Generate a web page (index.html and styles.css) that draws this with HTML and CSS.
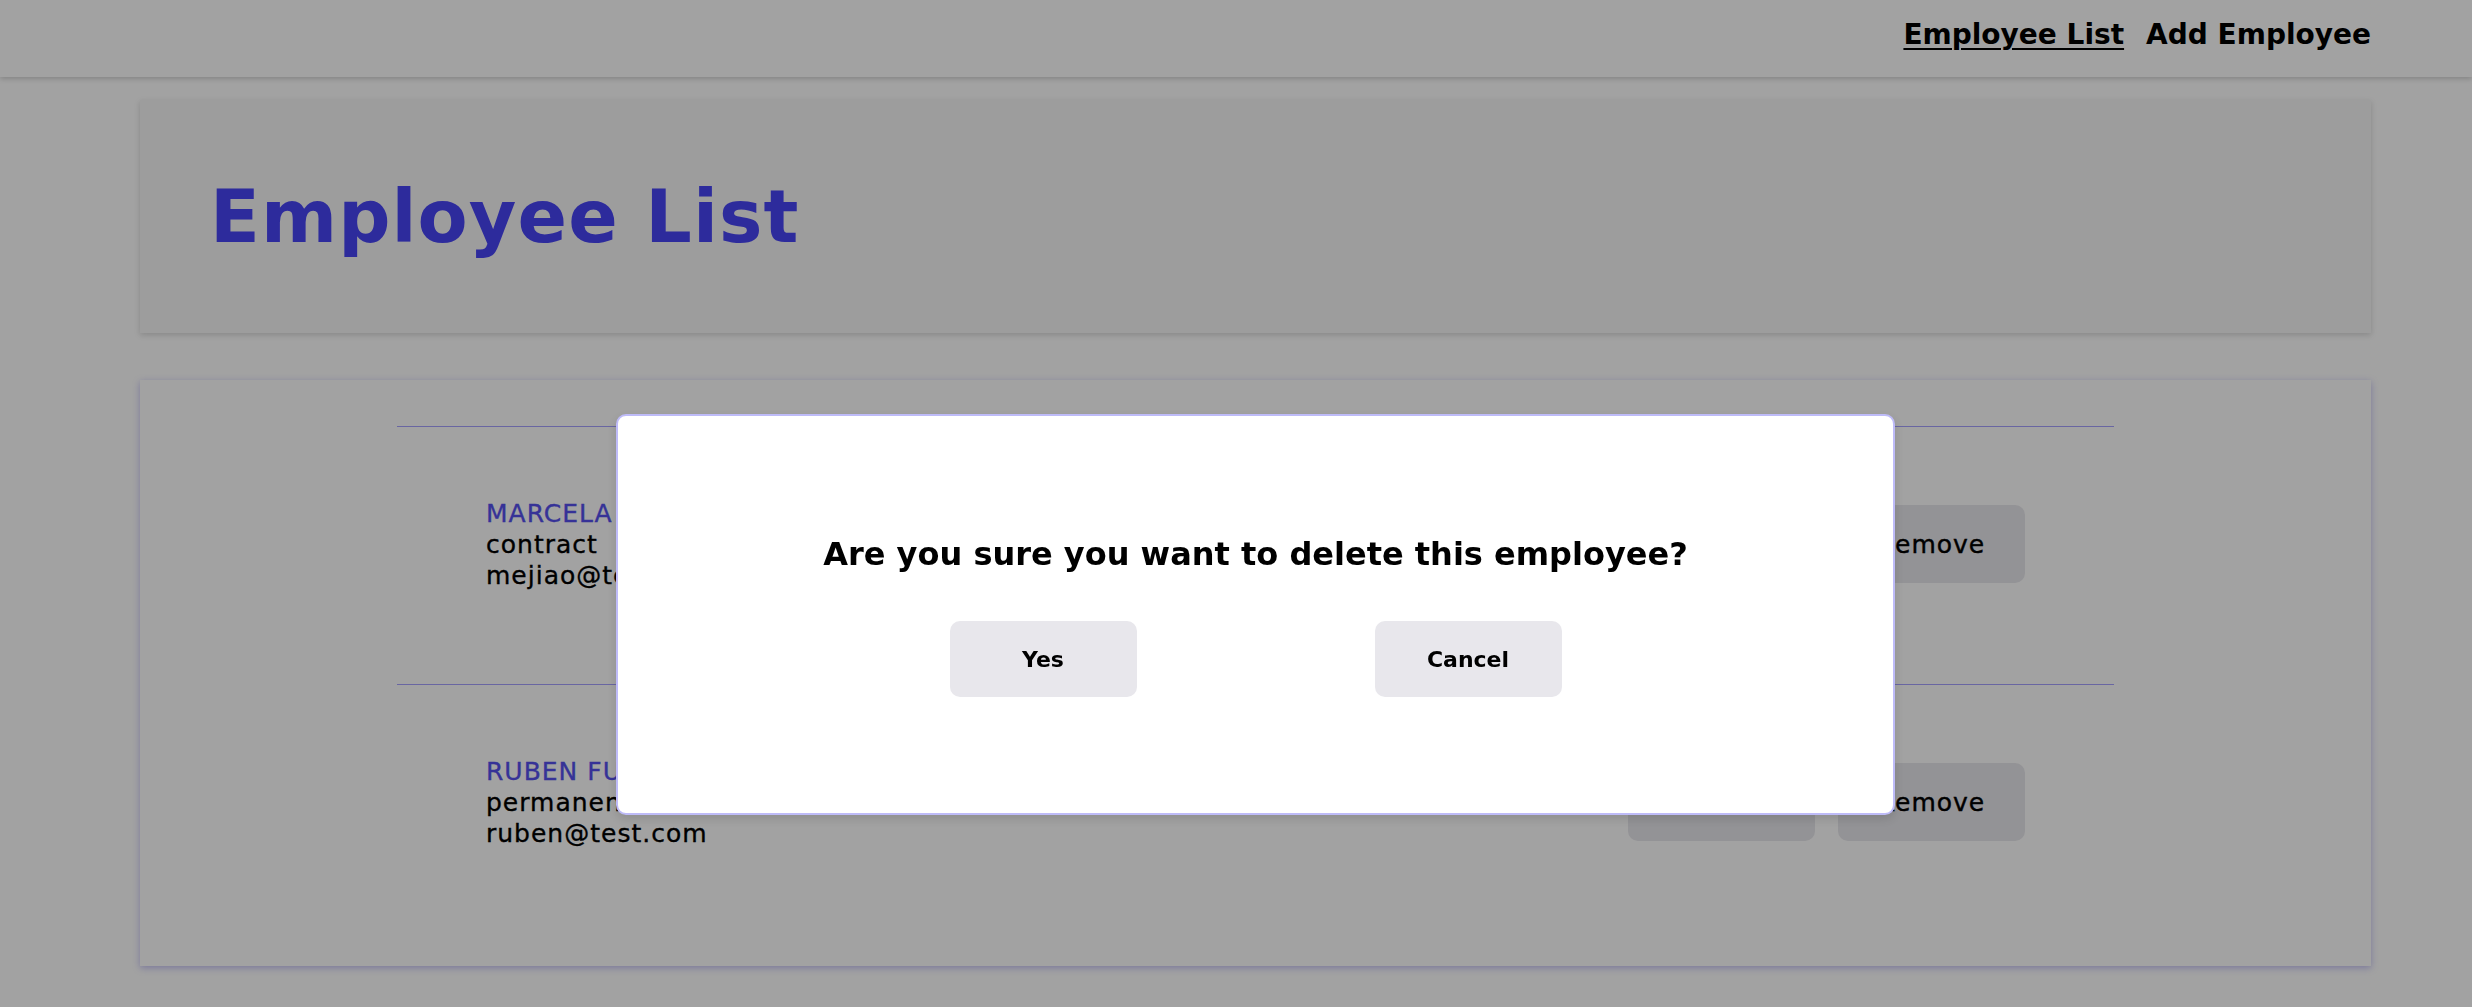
FILE: index.html
```html
<!DOCTYPE html>
<html lang="en">
<head>
<meta charset="utf-8">
<title>Employee List</title>
<link rel="stylesheet" href="styles.css">
</head>
<body>
<header class="navbar">
  <nav class="nav-links">
    <a class="nav-link active" href="#">Employee List</a>
    <a class="nav-link" href="#">Add Employee</a>
  </nav>
</header>
<main class="main">
  <section class="title-card">
    <h1 class="page-title">Employee List</h1>
  </section>
  <section class="list-card">
    <ul class="employee-list">
      <li class="employee-row">
        <div class="employee-info">
          <div class="employee-name">MARCELA MEJIA</div>
          <div class="employee-type">contract</div>
          <div class="employee-email">mejiao@test.com</div>
        </div>
        <div class="row-actions">
          <button class="btn row-btn">Edit</button>
          <button class="btn row-btn">Remove</button>
        </div>
      </li>
      <li class="employee-row">
        <div class="employee-info">
          <div class="employee-name">RUBEN FUENTES</div>
          <div class="employee-type">permanent</div>
          <div class="employee-email">ruben@test.com</div>
        </div>
        <div class="row-actions">
          <button class="btn row-btn">Edit</button>
          <button class="btn row-btn">Remove</button>
        </div>
      </li>
    </ul>
  </section>
</main>
<div class="overlay"></div>
<div class="modal">
  <p class="modal-question">Are you sure you want to delete this employee?</p>
  <div class="modal-actions">
    <button class="btn modal-btn">Yes</button>
    <button class="btn modal-btn">Cancel</button>
  </div>
</div>
</body>
</html>
```
FILE: styles.css
```css
* { box-sizing: border-box; }

html, body {
  margin: 0;
  padding: 0;
  background: #ffffff;
  font-family: "DejaVu Sans", "Noto Sans", sans-serif;
  color: #000;
}

.navbar {
  height: 77px;
  background: #ffffff;
  box-shadow: 0 2px 5px rgba(0, 0, 0, 0.18);
  display: flex;
  justify-content: flex-end;
  align-items: center;
  padding: 0 101px 8px 0;
  position: relative;
  z-index: 1;
}

.nav-links {
  display: flex;
  gap: 22px;
}

.nav-link {
  font-size: 28px;
  font-weight: 700;
  color: #000;
  text-decoration: none;
}

.nav-link.active {
  text-decoration: underline;
  text-decoration-thickness: 2px;
  text-underline-offset: 4px;
}

.main {
  padding: 23px 101px 40px 140px;
}

.title-card {
  height: 233px;
  background: #f7f7f7;
  box-shadow: 0 2px 6px rgba(0, 0, 0, 0.16);
  padding: 73px 0 0 70px;
}

.page-title {
  margin: 0;
  font-size: 73px;
  font-weight: 700;
  line-height: 88px;
  letter-spacing: 1.1px;
  color: #4844f6;
}

.list-card {
  margin-top: 47px;
  background: #ffffff;
  box-shadow: 0 2px 7px rgba(80, 70, 220, 0.35);
  padding: 46px 257px 24px;
}

.employee-list {
  list-style: none;
  margin: 0;
  padding: 0;
}

.employee-row {
  border-top: 1px solid #a5a1ff;
  height: 258px;
  padding: 71px 89px 0 89px;
  display: flex;
  justify-content: space-between;
  align-items: flex-start;
}

.employee-info {
  font-size: 25px;
  line-height: 31px;
  letter-spacing: 1px;
  -webkit-text-stroke: 0.35px currentColor;
}

.employee-name {
  color: #5550ee;
}

.row-actions {
  display: flex;
  gap: 23px;
  margin-top: 7px;
}

.btn {
  width: 187px;
  height: 78px;
  border: none;
  border-radius: 10px;
  background: #e8e7ec;
  font-family: "DejaVu Sans", "Noto Sans", sans-serif;
  font-size: 22px;
  font-weight: 700;
  color: #000;
  padding: 0;
}

.row-btn {
  font-size: 25px;
  font-weight: 400;
  letter-spacing: 1px;
  -webkit-text-stroke: 0.4px currentColor;
}

.overlay {
  position: fixed;
  inset: 0;
  background: rgba(0, 0, 0, 0.365);
  z-index: 5;
}

.modal {
  position: absolute;
  left: 616px;
  top: 414px;
  width: 1279px;
  height: 401px;
  background: #ffffff;
  border: 2px solid #bebbf8;
  border-radius: 10px;
  box-shadow: 0 4px 10px rgba(0, 0, 0, 0.12);
  z-index: 10;
  padding-top: 118px;
  display: flex;
  flex-direction: column;
  align-items: center;
}

.modal-question {
  margin: 0;
  font-size: 32px;
  font-weight: 700;
  line-height: 40px;
}

.modal-actions {
  margin-top: 47px;
  display: flex;
  gap: 238px;
}

.modal-btn {
  height: 76px;
}
```
